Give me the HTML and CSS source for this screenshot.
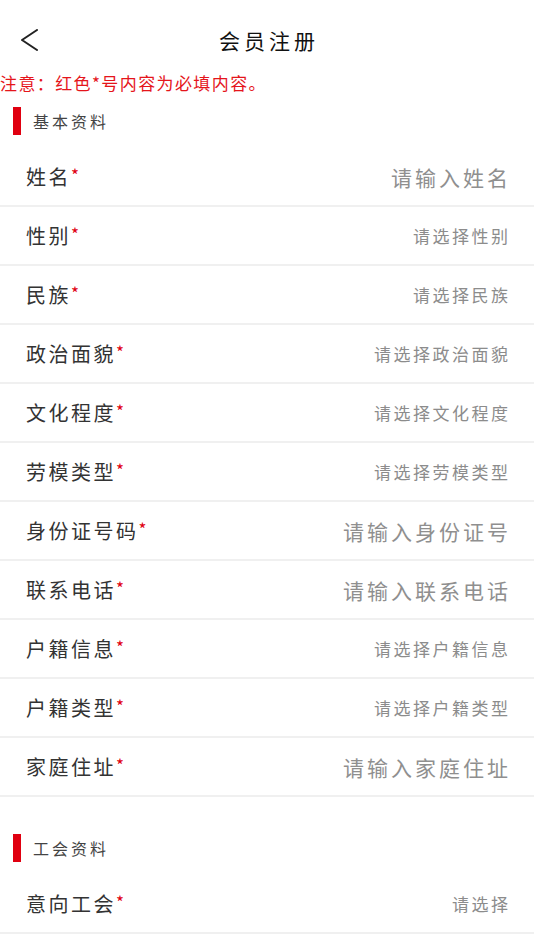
FILE: index.html
```html
<!DOCTYPE html>
<html lang="zh-CN">
<head>
<meta charset="utf-8">
<title>会员注册</title>
<link rel="stylesheet" href="styles.css">
</head>
<body>
<div class="page">
  <header class="topbar">
    <div class="back">
      <svg width="18" height="22" viewBox="0 0 18 22" aria-hidden="true">
        <polyline points="16,1 1,11 16,21" fill="none" stroke="#222" stroke-width="2" stroke-linecap="round" stroke-linejoin="round"/>
      </svg>
    </div>
    <h1 class="title">会员注册</h1>
    <div></div>
  </header>

  <p class="notice">注意：红色*号内容为必填内容。</p>

  <div class="section-head"><span class="bar"></span><span class="section-title">基本资料</span></div>
  <ul class="form">
    <li class="row"><span class="label">姓名<i class="req">*</i></span><span class="ph big">请输入姓名</span></li>
    <li class="row"><span class="label">性别<i class="req">*</i></span><span class="ph">请选择性别</span></li>
    <li class="row"><span class="label">民族<i class="req">*</i></span><span class="ph">请选择民族</span></li>
    <li class="row"><span class="label">政治面貌<i class="req">*</i></span><span class="ph">请选择政治面貌</span></li>
    <li class="row"><span class="label">文化程度<i class="req">*</i></span><span class="ph">请选择文化程度</span></li>
    <li class="row"><span class="label">劳模类型<i class="req">*</i></span><span class="ph">请选择劳模类型</span></li>
    <li class="row"><span class="label">身份证号码<i class="req">*</i></span><span class="ph big">请输入身份证号</span></li>
    <li class="row"><span class="label">联系电话<i class="req">*</i></span><span class="ph big">请输入联系电话</span></li>
    <li class="row"><span class="label">户籍信息<i class="req">*</i></span><span class="ph">请选择户籍信息</span></li>
    <li class="row"><span class="label">户籍类型<i class="req">*</i></span><span class="ph">请选择户籍类型</span></li>
    <li class="row"><span class="label">家庭住址<i class="req">*</i></span><span class="ph big">请输入家庭住址</span></li>
  </ul>

  <div class="section-head second"><span class="bar"></span><span class="section-title">工会资料</span></div>
  <ul class="form">
    <li class="row"><span class="label">意向工会<i class="req">*</i></span><span class="ph">请选择</span></li>
  </ul>
</div>
</body>
</html>
```

FILE: styles.css
```css
html, body {
  margin: 0;
  padding: 0;
  background: #ffffff;
}

body {
  font-family: "Noto Sans CJK SC", "Noto Sans", "Liberation Sans", sans-serif;
  color: #333333;
}

.page {
  width: 534px;
}

.topbar {
  display: grid;
  grid-template-columns: 1fr auto 1fr;
  align-items: center;
  padding: 26px 0 18px;
  height: 28px;
}

.back {
  padding-left: 21px;
  display: flex;
  align-items: center;
}

.back svg {
  display: block;
}

.title {
  margin: 0;
  font-size: 21px;
  font-weight: 400;
  line-height: 28px;
  letter-spacing: 4px;
  margin-right: -4px;
  color: #111111;
}

.notice {
  margin: 0;
  font-size: 17px;
  line-height: 22px;
  letter-spacing: 1.4px;
  color: #e5151b;
  white-space: nowrap;
}

.section-head {
  display: flex;
  align-items: center;
  height: 54px;
  padding-left: 13px;
}

.section-head.second {
  margin-top: 24px;
}

.bar {
  width: 8px;
  height: 28px;
  background: #e00010;
  margin-right: 12px;
}

.section-title {
  font-size: 16px;
  letter-spacing: 3px;
  color: #444444;
}

.form {
  list-style: none;
  margin: 0;
  padding: 0;
}

.row {
  display: flex;
  align-items: center;
  justify-content: space-between;
  height: 57px;
  padding: 0 26px;
  border-bottom: 2px solid #f0f0f0;
}

.label {
  font-size: 20px;
  letter-spacing: 2.5px;
  color: #333333;
  white-space: nowrap;
}

.req {
  font-style: normal;
  color: #e00010;
  font-size: 17px;
  letter-spacing: 0;
  position: relative;
  top: -3px;
}

.ph {
  font-size: 17px;
  letter-spacing: 2.5px;
  margin-right: -2.5px;
  color: #8c8c8c;
  white-space: nowrap;
}

.ph.big {
  font-size: 21px;
  letter-spacing: 3px;
  margin-right: -3px;
  color: #8f8f8f;
}
```
